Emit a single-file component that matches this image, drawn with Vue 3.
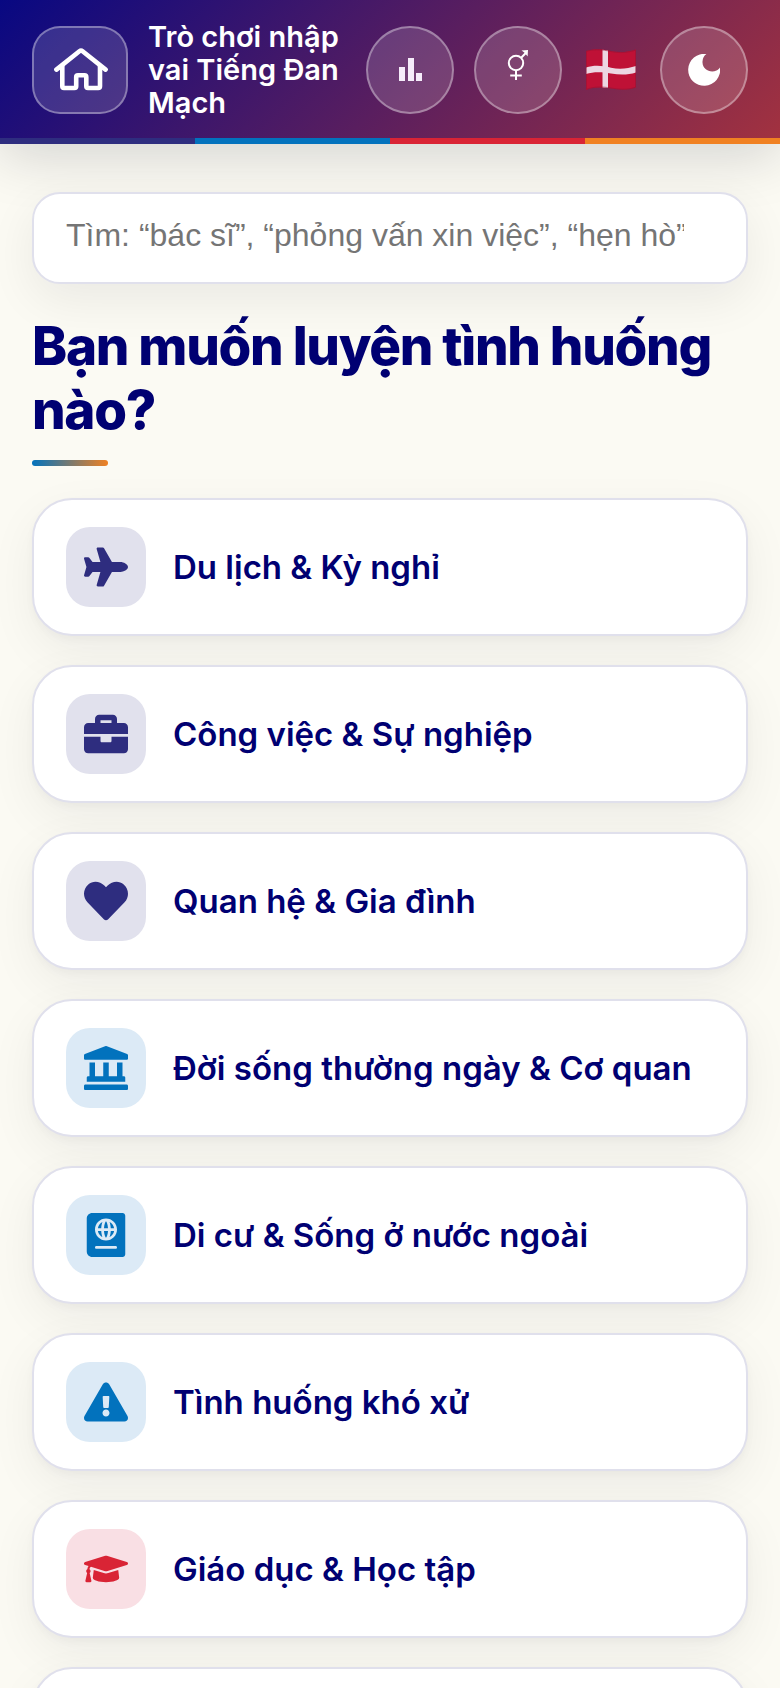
<script setup>
import { ref } from 'vue'

const query = ref('')

const icons = {
  plane: {
    box: '0 0 576 512',
    d: 'M480 192H365.71L260.61 8.06A16.014 16.014 0 0 0 246.71 0h-65.5c-10.63 0-18.3 10.17-15.38 20.39L214.86 192H112l-43.2-57.6c-3.02-4.03-7.77-6.4-12.8-6.4H16.01C5.6 128-2.04 137.78.49 147.88L32 256 .49 364.12C-2.04 374.22 5.6 384 16.01 384H56c5.04 0 9.78-2.37 12.8-6.4L112 320h102.86l-49.03 171.6c-2.92 10.22 4.75 20.4 15.38 20.4h65.5c5.74 0 11.04-3.08 13.89-8.06L365.71 320H480c35.35 0 96-28.65 96-64s-60.65-64-96-64z'
  },
  briefcase: {
    box: '0 0 512 512',
    d: 'M320 336c0 8.84-7.16 16-16 16h-96c-8.84 0-16-7.16-16-16v-48H0v144c0 25.6 22.4 48 48 48h416c25.6 0 48-22.4 48-48V288H320v48zm144-208h-80V80c0-25.6-22.4-48-48-48H176c-25.6 0-48 22.4-48 48v48H48c-25.6 0-48 22.4-48 48v80h512v-80c0-25.6-22.4-48-48-48zm-144 0H192V96h128v32z'
  },
  heart: {
    box: '0 0 512 512',
    d: 'M462.3 62.6C407.5 15.9 326 24.3 275.7 76.2L256 96.5l-19.7-20.3C186.1 24.3 104.5 15.9 49.7 62.6c-62.8 53.6-66.1 149.8-9.9 207.9l193.5 199.8c12.5 12.9 32.8 12.9 45.3 0l193.5-199.8c56.3-58.1 53-154.3-9.8-207.9z'
  },
  landmark: {
    box: '0 0 512 512',
    d: 'M501.62 92.11L267.24 2.04a31.958 31.958 0 0 0-22.47 0L10.38 92.11A16.001 16.001 0 0 0 0 107.09V144c0 8.84 7.16 16 16 16h480c8.84 0 16-7.16 16-16v-36.91c0-6.67-4.14-12.64-10.38-14.98zM64 192v160H48c-8.84 0-16 7.16-16 16v48h448v-48c0-8.84-7.16-16-16-16h-16V192h-64v160h-96V192h-64v160h-96V192H64zm432 256H16c-8.84 0-16 7.16-16 16v32c0 8.84 7.16 16 16 16h480c8.84 0 16-7.16 16-16v-32c0-8.84-7.16-16-16-16z'
  },
  passport: {
    box: '0 0 448 512',
    d: 'M129.62 176h39.09c1.49-27.03 6.54-51.33 14.21-70.41-27.71 13.24-48.02 39.19-53.3 70.41zm0 32c5.29 31.22 25.59 57.17 53.3 70.41-7.68-19.08-12.72-43.38-14.21-70.41h-39.09zM224 286.69c7.69-7.45 20.77-34.42 23.43-78.69h-46.87c2.67 44.26 15.75 71.24 23.44 78.69zM200.57 176h46.87c-2.66-44.26-15.74-71.24-23.43-78.69-7.7 7.45-20.78 34.43-23.44 78.69zm64.51 102.41c27.71-13.24 48.02-39.19 53.3-70.41h-39.09c-1.49 27.03-6.53 51.33-14.21 70.41zM416 0H64C28.65 0 0 28.65 0 64v384c0 35.35 28.65 64 64 64h352c17.67 0 32-14.33 32-32V32c0-17.67-14.33-32-32-32zm-80 416H112c-8.8 0-16-7.2-16-16s7.2-16 16-16h224c8.8 0 16 7.2 16 16s-7.2 16-16 16zm-112-96c-70.69 0-128-57.31-128-128S153.31 64 224 64s128 57.31 128 128-57.31 128-128 128zm41.08-214.41c7.68 19.08 12.72 43.38 14.21 70.41h39.09c-5.28-31.22-25.59-57.17-53.3-70.41z'
  },
  warning: {
    box: '0 0 576 512',
    d: 'M569.517 440.013C587.975 472.007 564.806 512 527.94 512H48.054c-36.937 0-59.999-40.055-41.577-71.987L246.423 23.985c18.467-32.009 64.72-31.951 83.154 0l239.94 416.028zM288 354c-25.405 0-46 20.595-46 46s20.595 46 46 46 46-20.595 46-46-20.595-46-46-46zm-43.673-165.346l7.418 136c.347 6.364 5.609 11.346 11.982 11.346h48.546c6.373 0 11.635-4.982 11.982-11.346l7.418-136c.375-6.874-5.098-12.654-11.982-12.654h-63.383c-6.884 0-12.356 5.78-11.981 12.654z'
  },
  cap: {
    box: '0 0 640 512',
    d: 'M622.34 153.2L343.4 67.5c-15.2-4.67-31.6-4.67-46.79 0L17.66 153.2c-23.54 7.23-23.54 38.36 0 45.59l48.63 14.94c-10.67 13.19-17.23 29.28-17.88 46.9C38.78 266.15 32 276.11 32 288c0 10.78 5.68 19.85 13.86 25.65L20.33 428.53C18.11 438.52 25.71 448 35.94 448h56.11c10.24 0 17.84-9.48 15.62-19.47L82.14 313.65C90.32 307.85 96 298.78 96 288c0-11.57-6.47-21.25-15.66-26.87.76-15.02 8.44-28.3 20.69-36.72L296.6 284.5c9.06 2.78 26.44 6.25 46.79 0l278.95-85.7c23.55-7.24 23.55-38.36 0-45.6zM352.79 315.09c-28.53 8.76-52.84 3.92-65.59 0l-145.02-44.55L128 384c0 35.35 85.96 64 192 64s192-28.65 192-64l-14.18-113.47-145.03 44.56z'
  }
}

const topics = [
  { label: 'Du lịch & Kỳ nghỉ', icon: icons.plane, tone: 'indigo' },
  { label: 'Công việc & Sự nghiệp', icon: icons.briefcase, tone: 'indigo' },
  { label: 'Quan hệ & Gia đình', icon: icons.heart, tone: 'indigo' },
  { label: 'Đời sống thường ngày & Cơ quan', icon: icons.landmark, tone: 'blue' },
  { label: 'Di cư & Sống ở nước ngoài', icon: icons.passport, tone: 'blue' },
  { label: 'Tình huống khó xử', icon: icons.warning, tone: 'blue' },
  { label: 'Giáo dục & Học tập', icon: icons.cap, tone: 'red' }
]
</script>

<template>
  <div class="page">
    <header class="header">
      <div class="bar">
        <a class="home" href="#" aria-label="Trang chủ">
          <svg width="56" height="48" viewBox="52 46 56 48" fill="none" stroke="currentColor" stroke-width="4.6" stroke-linecap="round" stroke-linejoin="round">
            <path d="M56.4 69.6L79.4 51.3Q81 50 82.6 51.3L105.6 69.6" />
            <path d="M62.3 66V86.2Q62.3 88 64 88H74.4Q76.2 88 76.2 86.2V77Q76.2 75.3 78 75.3H84.5Q86.3 75.3 86.3 77V86.2Q86.3 88 88 88H98.2Q100 88 100 86.2V66" />
          </svg>
        </a>
        <p class="title">Trò chơi nhập vai Tiếng Đan Mạch</p>
        <div class="actions">
          <button class="round" type="button" aria-label="Thống kê">
            <svg width="24" height="24" viewBox="-1 0 24 24" fill="#f5ecfa">
              <path d="M0 9h6v14H0zM9 0h6v23H9zM17 15h6v8h-6z" />
            </svg>
          </button>
          <button class="round" type="button" aria-label="Giới tính">
            <svg width="32" height="40" viewBox="502 50 32 40" fill="none" stroke="currentColor" stroke-width="2">
              <circle cx="516" cy="63" r="7.2" />
              <path d="M521.2 57.8L526.5 52.3M516 70.5V80M510.2 75.5H521.8" />
              <path d="M521.5 50.5L528 50L527.6 56.5L525.5 53.8L524 52.3Z" fill="currentColor" stroke="none" />
            </svg>
          </button>
          <button class="flag" type="button" aria-label="Đan Mạch">
            <svg width="50" height="42" viewBox="0 0 50 42">
              <path d="M0 2C8 -0.5 16 0 25 2S42 3 50 0.5V38.5C42 41.5 34 41 25 39.5S8 38 0 41Z" fill="#bf1136" />
              <path d="M16.5 0.7L22 1.4V39L16.5 38.5Z" fill="#ecd6e2" />
              <path d="M0 18.5C8 16 16 16.5 25 18.7S42 19.5 50 17V23.5C42 26 34 26 25 24.5S8 22.5 0 25Z" fill="#ecd6e2" />
              <path d="M0.5 2.3C8 0 16 0.5 25 2.5S42 3.5 49.5 1.2V38.2C42 41 34 40.5 25 39S8 37.5 0.5 40.3Z" fill="none" stroke="#8d1434" stroke-opacity="0.5" />
            </svg>
          </button>
          <button class="round" type="button" aria-label="Chế độ tối">
            <svg width="32" height="32" viewBox="0 0 32 32" fill="currentColor">
              <path d="M18.4 0A9.8 9.8 0 0 0 14.5 8.5C14.7 15.5 22.5 19.5 28.5 16.5C30 15.7 31 15 32 13.5A16 16 0 1 1 18.4 0Z" />
            </svg>
          </button>
        </div>
      </div>
      <div class="stripe"></div>
    </header>

    <main class="content">
      <form class="search" role="search" @submit.prevent>
        <input
          v-model="query"
          class="field"
          type="text"
          aria-label="Tìm tình huống"
          placeholder="Tìm: “bác sĩ”, “phỏng vấn xin việc”, “hẹn hò”"
        />
      </form>

      <h1 class="heading">Bạn muốn luyện tình huống nào?</h1>

      <div class="topics">
        <button v-for="topic in topics" :key="topic.label" class="card" type="button">
          <span class="tile" :class="topic.tone">
            <svg width="44" height="44" :viewBox="topic.icon.box" fill="currentColor" aria-hidden="true">
              <path :d="topic.icon.d" />
            </svg>
          </span>
          <span class="label">{{ topic.label }}</span>
        </button>
        <div class="card" aria-hidden="true"></div>
      </div>
    </main>
  </div>
</template>

<style>
body {
  margin: 0;
  background: #fbfaf3;
}
</style>

<style scoped>
.page {
  font-family: Inter, "Noto Sans", sans-serif;
  color: #000072;
  background: #fbfaf3;
}

button {
  font: inherit;
  color: inherit;
  cursor: pointer;
}

.header {
  position: relative;
  background: linear-gradient(135deg, #080882, #a3323f);
  box-shadow: 0 12px 56px rgba(0, 10, 30, 0.16);
  color: #fff;
}

.bar {
  display: flex;
  align-items: center;
  gap: 20px;
  padding: 20px 32px 19px;
}

.home {
  display: grid;
  place-items: center;
  flex: none;
  box-sizing: border-box;
  width: 96px;
  height: 88px;
  border: 2px solid rgba(255, 255, 255, 0.35);
  border-radius: 28px;
  background: rgba(255, 255, 255, 0.15);
  color: #fff;
}

.title {
  flex: 1;
  min-width: 0;
  margin: 0;
  font-size: 29px;
  line-height: 33px;
  font-weight: 600;
}

.actions {
  display: flex;
  align-items: center;
  gap: 20px;
}

.round {
  display: grid;
  place-items: center;
  box-sizing: border-box;
  width: 88px;
  height: 88px;
  padding: 0;
  border: 2px solid rgba(255, 255, 255, 0.35);
  border-radius: 50%;
  background: rgba(255, 255, 255, 0.15);
}

.flag {
  display: grid;
  place-items: center;
  padding: 0 4px;
  border: 0;
  background: none;
}

.stripe {
  height: 6px;
  background: linear-gradient(
    90deg,
    #2e2d7f 25%,
    #0272bd 25% 50%,
    #d92435 50% 75%,
    #f08122 75%
  );
}

.content {
  padding: 48px 32px;
}

.search {
  position: relative;
  display: flex;
  box-sizing: border-box;
  height: 92px;
  padding: 0 62px 6px 32px;
  border: 2px solid #e0e0ec;
  border-radius: 28px;
  background: #fff;
  box-shadow: 0 16px 48px rgba(0, 0, 30, 0.07);
}

.field {
  flex: 1;
  min-width: 0;
  padding: 0;
  border: 0;
  outline: 0;
  background: none;
  font-family: "Liberation Sans", Arial, sans-serif;
  font-size: 32px;
  color: #000072;
}

.field::placeholder {
  color: #757575;
  opacity: 1;
}

.heading {
  margin: 30px 0 32px;
  font-size: 53px;
  line-height: 64px;
  font-weight: 800;
  letter-spacing: -0.025em;
}

.heading::after {
  content: "";
  display: block;
  width: 76px;
  height: 6px;
  margin-top: 18px;
  border-radius: 3px;
  background: linear-gradient(90deg, #0272bd, #f08122);
}

.topics {
  display: grid;
  gap: 29px;
}

.card {
  display: flex;
  align-items: center;
  gap: 27px;
  box-sizing: border-box;
  min-height: 138px;
  padding: 26px 32px;
  border: 2px solid #e0e0ec;
  border-radius: 40px;
  background: #fff;
  box-shadow: 0 4px 8px rgba(0, 0, 30, 0.03), 0 16px 48px rgba(0, 0, 30, 0.06);
  text-align: left;
}

.tile {
  display: grid;
  place-items: center;
  flex: none;
  width: 80px;
  height: 80px;
  border-radius: 24px;
}

.indigo {
  background: #e1e1ed;
  color: #2e2d7f;
}

.blue {
  background: #dceaf6;
  color: #0272bd;
}

.red {
  background: #f9dfe4;
  color: #d92435;
}

.label {
  font-size: 33px;
  line-height: 44px;
  font-weight: 600;
}
</style>
